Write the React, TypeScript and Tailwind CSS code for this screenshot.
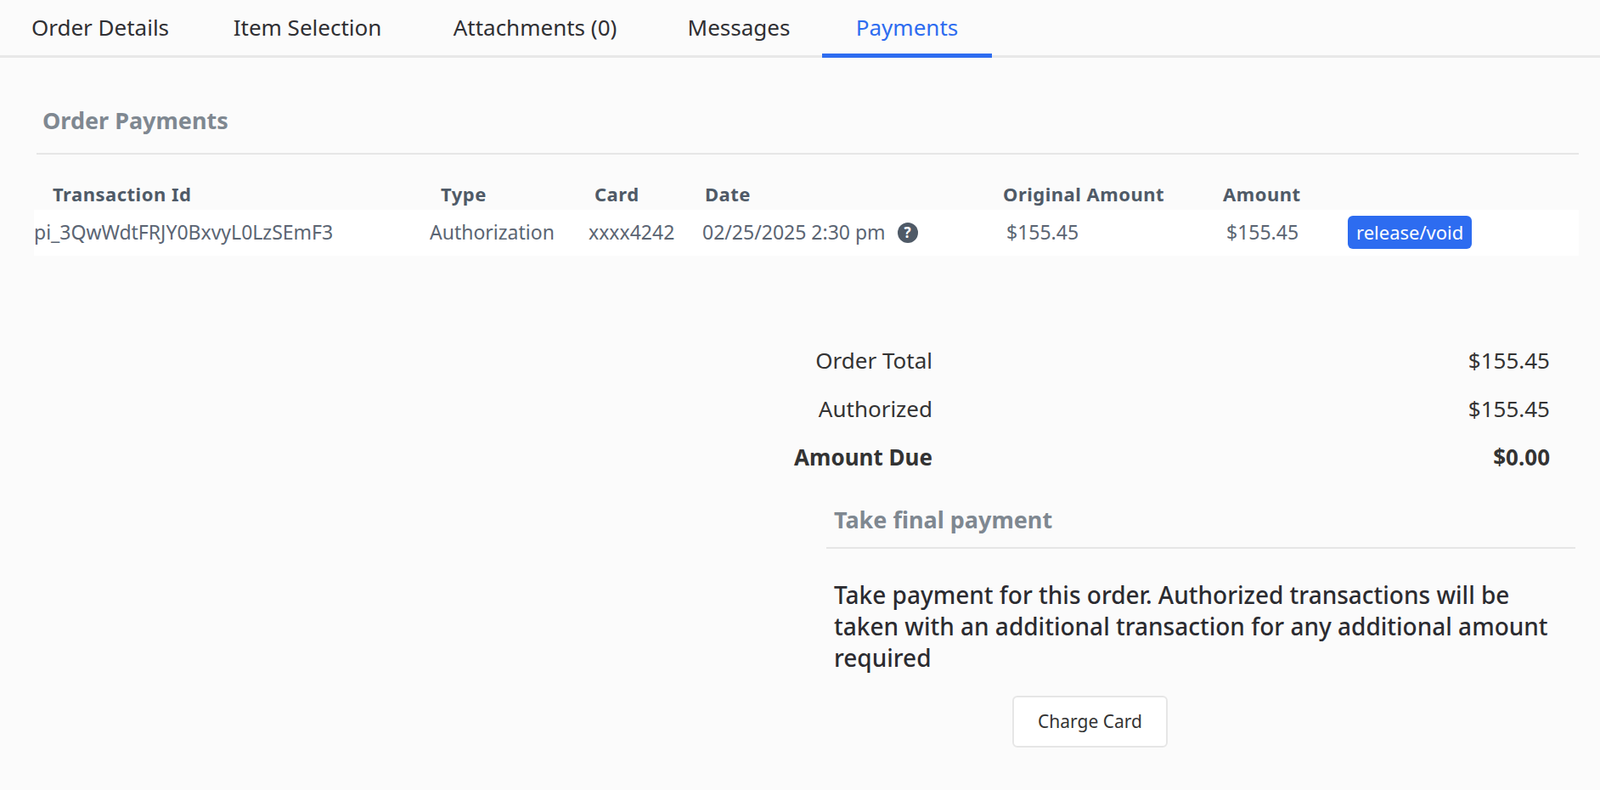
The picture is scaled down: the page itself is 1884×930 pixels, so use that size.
export default function App() {
  const tabs = ["Order Details", "Item Selection", "Attachments (0)", "Messages", "Payments"];
  const tabW = ["w-[236px]", "w-[252px]", "w-[284px]", "w-[196px]", "w-[200px]"];
  return (
    <div className="min-h-[930px] bg-[#fbfbfb] text-[#333] font-['Noto_Sans',sans-serif]">
      <div className="flex h-[68px] border-b-[3px] border-[#e8e8e8]">
        {tabs.map((t, i) => (
          <div key={t} className={`${tabW[i]} flex items-center justify-center text-[26px] ${i === 4 ? "text-[#2d6cf0] border-b-[5px] border-[#2d6cf0] -mb-[3px] pt-[2px]" : "text-[#2f2f33]"}`}>
            {t}
          </div>
        ))}
      </div>
      <div className="pl-[43px] pr-[25px]">
        <div className="pt-[54px] pb-[17px] pl-[7px] text-[27px] font-bold text-[#7f8891]">Order Payments</div>
        <div className="h-[2px] bg-[#e6e6e6]" />
        <div className="grid grid-cols-[466px_187px_134px_351px_259px_165px_1fr] pt-[30px] text-[22px] font-bold tracking-[0.5px] text-[#4f5a67]">
          <div className="pl-[19px]">Transaction Id</div>
          <div className="pl-[10px]">Type</div>
          <div className="pl-[4px]">Card</div>
          <div>Date</div>
          <div>Original Amount</div>
          <div>Amount</div>
          <div />
        </div>
        <div className="grid grid-cols-[466px_187px_134px_351px_259px_165px_1fr] items-center bg-white h-[54px] mt-[2px] -ml-[3px] text-[23px] text-[#5b6573]">
          <div>pi_3QwWdtFRJY0BxvyL0LzSEmF3</div>
          <div>Authorization</div>
          <div>xxxx4242</div>
          <div className="flex items-center">
            <span>02/25/2025 2:30 pm</span>
            <span className="ml-[14px] w-[24px] h-[24px] rounded-full bg-[#4f5a67] text-white text-[17px] font-bold flex items-center justify-center">?</span>
          </div>
          <div className="pl-[7px]">$155.45</div>
          <div className="pl-[7px]">$155.45</div>
          <div>
            <span className="inline-block -ml-[15px] rounded-[6px] bg-[#2d6cf0] text-white px-[10px] py-[3px] text-[22px]">release/void</span>
          </div>
        </div>
        <div className="flex justify-end">
          <div className="w-[961px] pt-[104px]">
            <div className="flex flex-col gap-[18px] text-[26px]">
              <div className="flex justify-between"><span className="w-[200px] text-right">Order Total</span><span className="pr-[34px]">$155.45</span></div>
              <div className="flex justify-between"><span className="w-[200px] text-right">Authorized</span><span className="pr-[34px]">$155.45</span></div>
              <div className="flex justify-between font-bold"><span className="w-[200px] text-right">Amount Due</span><span className="pr-[34px]">$0.00</span></div>
            </div>
            <div className="ml-[75px] mt-[34px]">
              <div className="pl-[9px] pb-[12px] text-[27px] font-bold text-[#7f8891]">Take final payment</div>
              <div className="h-[2px] bg-[#e6e6e6] mr-[4px]" />
              <p className="pl-[9px] pr-[20px] pt-[36px] text-[28px] leading-[37px] font-medium text-[#2b2b30] font-['Inter',sans-serif]">
                Take payment for this order. Authorized transactions will be taken with an additional transaction for any additional amount required
              </p>
              <div className="pt-[26px] pl-[219px]">
                <button className="w-[183px] h-[61px] bg-white border-2 border-[#e6e6e6] rounded-[6px] text-[21px] text-[#333]">Charge Card</button>
              </div>
            </div>
          </div>
        </div>
      </div>
    </div>
  );
}
